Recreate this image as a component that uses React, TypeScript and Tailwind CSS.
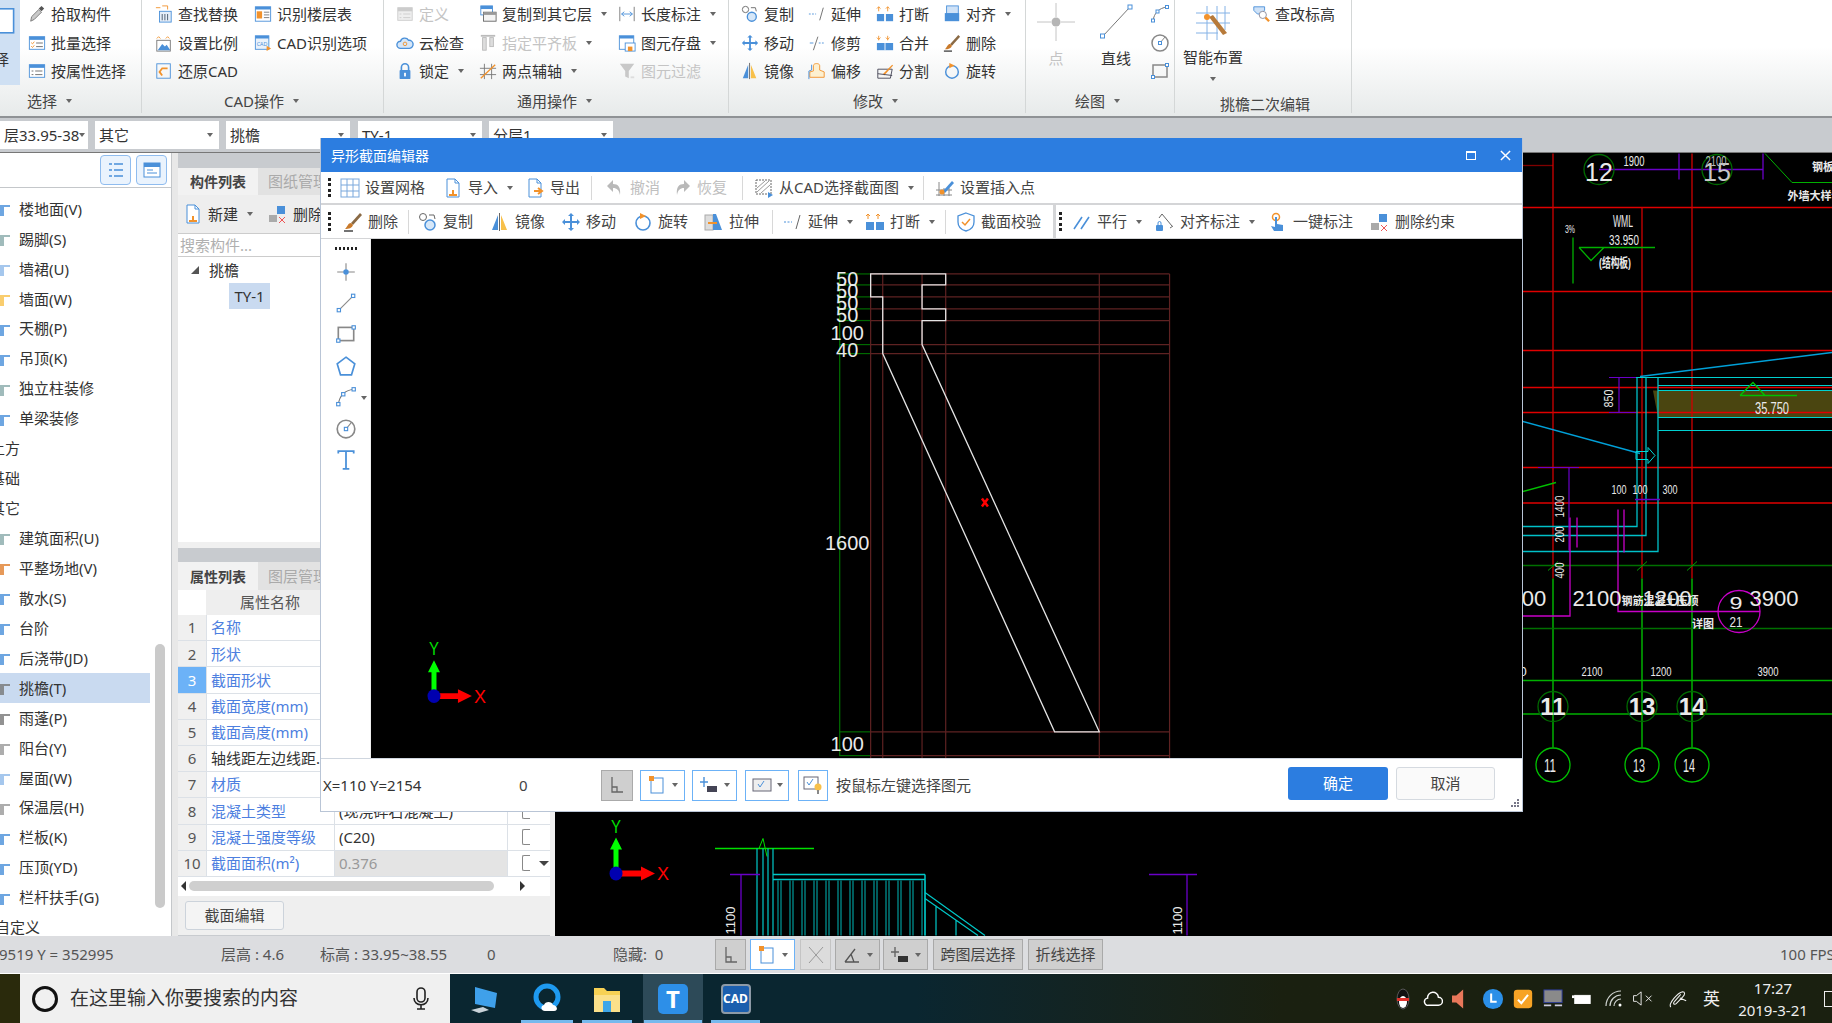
import type { ReactNode } from "react";

const B = "#4a90d9";
const O = "#f2922b";
const Y = "#f7c04a";
const GR = "#a9adb1";
const K = "#5a5a5a";

const ICONS: Record<string, ReactNode> = {
  pick: (<><path d="M3 18l1-5 8-8 3 3-8 8z" fill="#c9c9c9" stroke="#777" /><path d="M12 4l3-3 3 3-3 3z" fill="#555" /></>),
  batch: (<><rect x="1.5" y="3" width="17" height="14" fill="#fff" stroke={B} /><rect x="1.5" y="3" width="17" height="3.5" fill={B} /><path d="M3.5 9.5l1.5 1.5 2-2.5M3.5 13.5l1.5 1.5 2-2.5" stroke={O} fill="none" /><path d="M9 10h7.500M9 14h7.500" stroke="#666" /></>),
  attr: (<><rect x="1.5" y="3" width="17" height="14" fill="#fff" stroke={B} /><rect x="1.5" y="3" width="17" height="3.500" fill={B} /><path d="M4 10h2M4 14h2M8 10h8M8 14h8" stroke="#666" /></>),
  find: (<><path d="M1 3h5M8 1l6 0 0 4" stroke={O} fill="none" /><rect x="5" y="7" width="13" height="12" fill="#e5eef9" stroke={B} /><path d="M8 10v7M11 10v7M14 10v7" stroke="#456" /></>),
  scale: (<><path d="M2 5l2-2 2 2M12 5l2-2 2 2" stroke={O} fill="none" /><rect x="2" y="7" width="15" height="12" fill="#fff" stroke="#777" /><path d="M3 18l5-7 3 3 2-2 4 6z" fill={B} /></>),
  restore: (<><rect x="2" y="2" width="15" height="16" fill="none" stroke={B} /><path d="M14 7H8l-3 4 3 4" fill="none" stroke={O} strokeWidth="2" /></>),
  floor: (<><rect x="1.5" y="2" width="17" height="16" fill="#fff" stroke={B} /><rect x="1.500" y="2" width="17" height="3" fill={B} /><rect x="3" y="7" width="6" height="8" fill={O} /><path d="M11 8h6M11 11h6M11 14h6" stroke="#777" /></>),
  cadopt: (<><rect x="1.5" y="2" width="15" height="15" fill="#eaf2fb" stroke={B} /><rect x="1.5" y="2" width="15" height="3" fill={B} /><text x="3" y="13" fontSize="6" fill={B}>CAD</text><path d="M14 13l5 3-5 3z" fill={O} /></>),
  define: (<><rect x="2" y="3" width="16" height="14" fill="#eee" stroke="#ccc" /><rect x="2" y="3" width="16" height="4" fill="#ccc" /><path d="M8 10h8M8 14h8M4 10h2M4 14h2" stroke="#ccc" /></>),
  cloud: (<><path d="M5 16a4 4 0 010-8 5 5 0 019-1 4.500 4.500 0 011 9z" fill="#d5e6f8" stroke={B} strokeWidth="1.500" /><circle cx="10" cy="11" r="2" fill="none" stroke={O} /></>),
  lock: (<><path d="M6 9V6a4 4 0 018 0v3" fill="none" stroke={B} strokeWidth="1.800" /><rect x="4" y="9" width="12" height="10" rx="1" fill={B} /><rect x="9" y="12" width="2" height="4" fill="#fff" /></>),
  copylayer: (<><rect x="2" y="1" width="13" height="10" fill="#fff" stroke={B} /><rect x="2" y="1" width="13" height="3.500" fill={B} /><rect x="5" y="8" width="14" height="10" fill="#f4f4f4" stroke="#666" /><rect x="5" y="8" width="14" height="3" fill="#999" /></>),
  flat: (<><path d="M2 2h16" stroke="#bbb" strokeWidth="2" /><rect x="4" y="4" width="4" height="14" fill="#ddd" stroke="#bbb" /><rect x="12" y="4" width="4" height="10" fill="#ddd" stroke="#bbb" /></>),
  twopt: (<><path d="M6 2v17M14 2v17M1 7h18M1 14h18" stroke="#777" /><path d="M2 18L18 3" stroke={O} strokeWidth="1.500" /></>),
  len: (<><path d="M2 2v16M18 2v16" stroke="#777" /><path d="M4 10h12M4 10l3-2.500M4 10l3 2.500M16 10l-3-2.500M16 10l-3 2.500" stroke={B} fill="none" /></>),
  save: (<><rect x="1.500" y="2" width="16" height="15" fill="#fff" stroke={B} /><rect x="1.500" y="2" width="16" height="3" fill={B} /><rect x="8" y="10" width="11" height="9" fill="#fff" stroke={B} /><rect x="11" y="14" width="5" height="5" fill={O} /></>),
  filter: (<><path d="M2 2h16l-6 8v8l-4-2v-6z" fill="#c8c8c8" /><rect x="14" y="16" width="4" height="2" fill="#ddd" /></>),
  copy: (<><circle cx="5" cy="5" r="3.500" fill="#fff" stroke="#666" /><circle cx="12" cy="13" r="5" fill="#d6e7f8" stroke={B} strokeWidth="1.500" /><path d="M11 3h5l1 4" stroke="#666" fill="none" /></>),
  extend: (<><path d="M1 10h8" stroke={B} strokeDasharray="2 1.500" /><path d="M13 17L17 3" stroke="#666" /></>),
  brk: (<><path d="M3 2v5M1 4l2-2 2 2M13 2v5M11 4l2-2 2 2" stroke={O} fill="none" /><rect x="1" y="10" width="8" height="8" fill={B} /><rect x="11" y="10" width="8" height="8" fill={B} /></>),
  aligntop: (<><rect x="4" y="1" width="13" height="9" fill="#cfe2f7" stroke={B} /><rect x="2" y="9" width="16" height="9" fill={B} /></>),
  move: (<path d="M10 1l3 3h-2v5h5V7l3 3-3 3v-2h-5v5h2l-3 3-3-3h2v-5H4v2l-3-3 3-3v2h5V4H7z" fill={B} />),
  trim: (<><path d="M12 10h7" stroke={B} strokeDasharray="2 1.500" /><path d="M2 10h4" stroke={B} /><path d="M6 18L11 3" stroke="#666" /></>),
  merge: (<><path d="M3 2v5M1 4l2 2 2-2M13 2v5M11 4l2 2 2-2" stroke={O} fill="none" /><rect x="1" y="10" width="18" height="8" fill={B} /><path d="M10 10v8" stroke="#fff" /></>),
  brush: (<><path d="M17 1L8 11l2 2L19 3z" fill="#8a6a45" /><path d="M8 11c-3 0-3 3-6 6 4 0 7-1 8-4z" fill="#c97a2b" /><path d="M1 19h9" stroke="#444" strokeWidth="1.500" /></>),
  mirror: (<><path d="M8 3v15H2z" fill={B} /><path d="M11 3v15h6z" fill={Y} /><path d="M9.500 1v18" stroke="#666" /></>),
  offset: (<><path d="M2 17V11l4-1V4c0-3 7-3 7 0v5l5 2v6z" fill="#fdf0d0" stroke={O} /><path d="M1 19V10l3-1V3" fill="none" stroke={B} /></>),
  split: (<><path d="M2 8h16l-2 10H2z" fill="none" stroke="#445" /><path d="M8 13L18 3l1 1L9 15z" fill={O} /><path d="M2 13l16 2" stroke="#445" /></>),
  rotate: (<><circle cx="10" cy="11" r="7" fill="none" stroke={B} strokeWidth="1.600" /><path d="M7 1l6 3-6 3z" fill={O} /></>),
  arc: (<><path d="M3 17C4 9 9 4 17 3" fill="none" stroke="#777" /><rect x="1.500" y="15" width="3" height="3" fill="#fff" stroke={B} /><rect x="15.500" y="1.500" width="3" height="3" fill="#fff" stroke={B} /><rect x="6" y="6" width="3" height="3" fill="#fff" stroke={B} /></>),
  circ: (<><circle cx="10" cy="10" r="8" fill="none" stroke="#888" strokeWidth="1.500" /><path d="M10 10l5-6" stroke="#888" /><rect x="8.500" y="8.500" width="3" height="3" fill="#fff" stroke={B} /></>),
  rect: (<><rect x="3" y="4" width="14" height="12" fill="none" stroke="#888" strokeWidth="1.500" /><rect x="1.500" y="14.500" width="3" height="3" fill="#fff" stroke={B} /><rect x="15.500" y="2.500" width="3" height="3" fill="#fff" stroke={B} /></>),
  elev: (<><path d="M2 2h12v4l-5 4H6L2 6z" fill="#cfe2f7" stroke={B} /><circle cx="12" cy="11" r="4" fill="#fff" stroke="#889" /><path d="M15 14l4 4" stroke={O} strokeWidth="2.500" /></>),
  grid: (<><rect x="1" y="1" width="18" height="18" fill="#fff" stroke="#7aa8dc" /><path d="M7 1v18M13 1v18M1 7h18M1 13h18" stroke="#7aa8dc" /></>),
  imp: (<><path d="M4 1h8l4 4v14H4z" fill="#fff" stroke={B} /><path d="M12 1v4h4" fill="none" stroke={B} /><path d="M6 17h8M10 12v6" stroke={O} strokeWidth="2" /></>),
  exp: (<><path d="M4 1h8l4 4v14H4z" fill="#fff" stroke={B} /><path d="M12 1v4h4" fill="none" stroke={B} /><path d="M9 13h7M13 10l4 3-4 3" fill="none" stroke={O} strokeWidth="2" /></>),
  undo: (<path d="M8 2L2 8l6 6v-4c4 0 6 2 7 7 1-8-2-11-7-11z" fill="#b9b9b9" />),
  redo: (<path d="M12 2l6 6-6 6v-4c-4 0-6 2-7 7-1-8 2-11 7-11z" fill="#b9b9b9" />),
  cadsel: (<><rect x="2" y="2" width="15" height="14" fill="url(#none)" stroke="#666" strokeDasharray="2 1" /><path d="M3 14L15 3M3 10l8-7M7 15l9-8" stroke="#999" /><path d="M14 14l5 3-5 3z" fill={B} /></>),
  insert: (<><path d="M4 4v14M9 10v8M14 10v8M1 12h16M1 17h16" stroke="#888" /><path d="M8 13l9-10 2 2-9 10z" fill={B} /><circle cx="7" cy="14" r="2.500" fill={O} /></>),
  stretch: (<><rect x="1" y="3" width="8" height="15" fill="#ddd" stroke="#aaa" /><path d="M9 2h3l6 16H9z" fill={B} /><path d="M4 11h9" stroke={O} strokeWidth="2" /></>),
  verify: (<><path d="M10 1l8 3v6c0 5-4 8-8 9-4-1-8-4-8-9V4z" fill="#fff" stroke={B} strokeWidth="1.300" /><path d="M6 10l3 3 5-6" fill="none" stroke={O} strokeWidth="1.500" /></>),
  parallel: (<path d="M2 17L10 5M9 17l8-12" stroke={B} strokeWidth="1.600" />),
  aligndim: (<><rect x="1" y="13" width="7" height="6" rx="1" fill={B} /><path d="M3 13v-2a1.500 1.500 0 013 0v2" fill="none" stroke={B} /><path d="M7 2l10 12M4 6l3-4M15 16l3-2" stroke="#666" fill="none" /></>),
  onekey: (<><circle cx="8" cy="5" r="3.500" fill="none" stroke={O} strokeWidth="1.500" /><path d="M7 5h2v7l6 1v6H6l-3-5 4 1z" fill={B} /></>),
  delcons: (<><rect x="1" y="11" width="8" height="7" fill="#aaa" /><rect x="9" y="2" width="8" height="8" fill={B} /><path d="M11 13l6 6M17 13l-6 6" stroke="#e55" /></>),
  pointtool: (<><path d="M10 2v6M10 12v6M2 10h6M12 10h6" stroke="#888" /><circle cx="10" cy="10" r="2.500" fill={B} /></>),
  line: (<><path d="M4 16L16 4" stroke="#888" /><rect x="2" y="15" width="3" height="3" fill="#fff" stroke={B} /><rect x="15" y="2" width="3" height="3" fill="#fff" stroke={B} /></>),
  poly: (<path d="M10 2l8 6-3 10H5L2 8z" fill="none" stroke={B} strokeWidth="1.500" />),
  text: (<path d="M3 4V2h14v2M10 2v16M7 18h6" fill="none" stroke={B} strokeWidth="1.600" />),
  ortho: (<path d="M5 2v15h11M5 12h5v5" fill="none" stroke="#666" strokeWidth="1.300" />),
  box: (<><rect x="4" y="3" width="12" height="15" fill="#fff" stroke={B} /><rect x="2" y="1" width="5" height="5" fill={O} /></>),
  plusbox: (<><path d="M5 2v10M1 7h8" stroke={B} strokeWidth="1.400" /><rect x="8" y="11" width="10" height="6" fill="#445" /></>),
  plusbox2: (<><path d="M5 2v10M1 7h8" stroke="#666" strokeWidth="1.400" /><rect x="8" y="11" width="10" height="6" fill="#333" /></>),
  chk: (<><rect x="1" y="4" width="18" height="12" fill="#eee" stroke="#667" /><path d="M6 9l2 3 4-6" stroke={B} fill="none" /></>),
  tip: (<><rect x="1" y="2" width="14" height="12" fill="#fff" stroke="#667" /><path d="M4 7l2 3 4-6" stroke={B} fill="none" /><circle cx="15" cy="12" r="3.500" fill={Y} /><rect x="14" y="15" width="2" height="4" fill="#888" /></>),
  angle: (<path d="M3 17h14M3 17L13 4M9 9l3 8" fill="none" stroke="#555" strokeWidth="1.300" />),
  cross: (<path d="M3 2l14 16M17 2L3 18" fill="none" stroke="#999" />),
};

function Icon({ name, cls = "w-5 h-5" }: { name: string; cls?: string }) {
  return (
    <svg viewBox="0 0 20 20" className={"shrink-0 " + cls}>
      {ICONS[name]}
    </svg>
  );
}

function Caret({ cls = "ml-[9px]" }: { cls?: string }) {
  return <span className={"inline-block h-0 w-0 shrink-0 border-x-[3.5px] border-t-[4px] border-x-transparent border-t-[#666] " + cls} />;
}

function RItem({ icon, label, off, caret }: { icon: string; label: string; off?: boolean; caret?: boolean }) {
  return (
    <div className={"flex h-[28.5px] items-center whitespace-nowrap " + (off ? "text-[#c4c4c4]" : "text-[#333]")}>
      <Icon name={icon} cls="w-[18px] h-[18px]" />
      <span className="ml-[5px]">{label}</span>
      {caret && <Caret />}
    </div>
  );
}

function GroupLabel({ label, cls, plain }: { label: string; cls: string; plain?: boolean }) {
  return (
    <div className={"absolute left-0 right-0 top-[90px] flex h-[22px] items-center text-[#444] " + cls}>
      {label}
      {!plain && <Caret />}
    </div>
  );
}

function Ribbon() {
  return (
    <div className="flex h-[118px] shrink-0 border-b-2 border-[#8f9295] bg-linear-to-b from-white from-40% to-[#e7eaea] text-[15px]">
      <div className="relative flex h-[113px] w-[142px] border-r border-[#d4d7d7]">
        <div className="h-[85px] w-[20px] shrink-0 overflow-hidden bg-[#cfe0f3]">
          <div className="relative h-[45px]">
            <div className="absolute -left-[12px] top-[4px]">
              <Icon name="box" cls="w-8 h-8" />
            </div>
          </div>
          <div className="-ml-[6px] mt-[3px] text-[#333]">择</div>
        </div>
        <div className="ml-[8px]">
          <RItem icon="pick" label="拾取构件" />
          <RItem icon="batch" label="批量选择" />
          <RItem icon="attr" label="按属性选择" />
        </div>
        <GroupLabel label="选择" cls="pl-[27px]" />
      </div>
      <div className="relative flex h-[113px] w-[242px] border-r border-[#d4d7d7] pl-[13px]">
        <div className="w-[99px]">
          <RItem icon="find" label="查找替换" />
          <RItem icon="scale" label="设置比例" />
          <RItem icon="restore" label="还原CAD" />
        </div>
        <div>
          <RItem icon="floor" label="识别楼层表" />
          <RItem icon="cadopt" label="CAD识别选项" />
        </div>
        <GroupLabel label="CAD操作" cls="pl-[82px]" />
      </div>
      <div className="relative flex h-[113px] w-[345px] border-r border-[#d4d7d7] pl-[12px]">
        <div className="w-[83px]">
          <RItem icon="define" label="定义" off />
          <RItem icon="cloud" label="云检查" />
          <RItem icon="lock" label="锁定" caret />
        </div>
        <div className="w-[139px]">
          <RItem icon="copylayer" label="复制到其它层" caret />
          <RItem icon="flat" label="指定平齐板" off caret />
          <RItem icon="twopt" label="两点辅轴" caret />
        </div>
        <div>
          <RItem icon="len" label="长度标注" caret />
          <RItem icon="save" label="图元存盘" caret />
          <RItem icon="filter" label="图元过滤" off />
        </div>
        <GroupLabel label="通用操作" cls="pl-[133px]" />
      </div>
      <div className="relative flex h-[113px] w-[297px] border-r border-[#d4d7d7] pl-[12px]">
        <div className="w-[67px]">
          <RItem icon="copy" label="复制" />
          <RItem icon="move" label="移动" />
          <RItem icon="mirror" label="镜像" />
        </div>
        <div className="w-[68px]">
          <RItem icon="extend" label="延伸" />
          <RItem icon="trim" label="修剪" />
          <RItem icon="offset" label="偏移" />
        </div>
        <div className="w-[67px]">
          <RItem icon="brk" label="打断" />
          <RItem icon="merge" label="合并" />
          <RItem icon="split" label="分割" />
        </div>
        <div>
          <RItem icon="aligntop" label="对齐" caret />
          <RItem icon="brush" label="删除" />
          <RItem icon="rotate" label="旋转" />
        </div>
        <GroupLabel label="修改" cls="pl-[124px]" />
      </div>
      <div className="relative flex h-[113px] w-[149px] border-r border-[#d4d7d7]">
        <div className="flex w-[60px] flex-col items-center pt-[3px] text-[#c4c4c4]">
          <svg viewBox="0 0 38 38" className="h-[38px] w-[38px]">
            <path d="M19 0v14M19 24v14M0 19h14M24 19h14" stroke="#c4c4c4" />
            <circle cx="19" cy="19" r="4.500" fill="#b5b5b5" />
          </svg>
          <span className="mt-[6px]">点</span>
        </div>
        <div className="flex w-[60px] flex-col items-center pt-[3px] text-[#333]">
          <svg viewBox="0 0 38 38" className="h-[38px] w-[38px]">
            <path d="M6 33L33 4" stroke="#777" />
            <rect x="3.500" y="31" width="4" height="4" fill="#fff" stroke={B} />
            <rect x="31" y="2" width="4" height="4" fill="#fff" stroke={B} />
          </svg>
          <span className="mt-[6px]">直线</span>
        </div>
        <div className="pl-[4px]">
          <div className="flex h-[28.5px] items-center"><Icon name="arc" /></div>
          <div className="flex h-[28.5px] items-center"><Icon name="circ" /></div>
          <div className="flex h-[28.5px] items-center"><Icon name="rect" /></div>
        </div>
        <GroupLabel label="绘图" cls="pl-[49px]" />
      </div>
      <div className="relative flex h-[113px] w-[177px] border-r border-[#d4d7d7] pl-[8px]">
        <div className="flex w-[69px] flex-col items-start pt-[5px] text-[#333]">
          <svg viewBox="0 0 36 36" className="ml-[12px] h-[36px] w-[36px]">
            <path d="M1 8h34M1 18h34M1 28h22M12 1v34M22 1v34M30 1v24" stroke="#84b2e6" />
            <path d="M14 12l14 18 4-2-14-18z" fill="#b77a3a" />
            <circle cx="12" cy="12" r="3" fill={O} />
          </svg>
          <span className="mt-[5px]">智能布置</span>
          <Caret cls="ml-[27px] mt-[8px]" />
        </div>
        <div>
          <RItem icon="elev" label="查改标高" />
        </div>
        <GroupLabel label="挑檐二次编辑" cls="pl-[45px] top-[93px]" plain />
      </div>
      <div className="flex-1" />
    </div>
  );
}

function Combo({ label, cls }: { label: string; cls: string }) {
  return (
    <div className={"flex h-[28px] items-center justify-between overflow-hidden whitespace-nowrap bg-white pl-[4px] pr-[6px] text-[15px] text-[#333] " + cls}>
      <span>{label}</span>
      <Caret cls="" />
    </div>
  );
}

function ComboBar() {
  return (
    <div className="flex h-[35px] shrink-0 items-center gap-[7px] border-b border-[#777] bg-[#c8cbcf] text-[15px]">
      <Combo label="层33.95-38" cls="w-[88px]" />
      <Combo label="其它" cls="w-[124px]" />
      <Combo label="挑檐" cls="w-[124px]" />
      <Combo label="TY-1" cls="ml-[1px] w-[124px]" />
      <Combo label="分层1" cls="w-[124px]" />
    </div>
  );
}

const TREE: { t: string; i?: string; c?: string; sec?: boolean; on?: boolean }[] = [
  { t: "楼地面(V)", c: "#4a90d9" },
  { t: "踢脚(S)", c: "#8aa" },
  { t: "墙裙(U)", c: "#8fb9e8" },
  { t: "墙面(W)", c: "#f7c04a" },
  { t: "天棚(P)", c: "#4a90d9" },
  { t: "吊顶(K)", c: "#4a90d9" },
  { t: "独立柱装修", c: "#8aa" },
  { t: "单梁装修", c: "#4a90d9" },
  { t: "土方", sec: true },
  { t: "基础", sec: true },
  { t: "其它", sec: true },
  { t: "建筑面积(U)", c: "#8aa" },
  { t: "平整场地(V)", c: "#e08030" },
  { t: "散水(S)", c: "#4a90d9" },
  { t: "台阶", c: "#4a90d9" },
  { t: "后浇带(JD)", c: "#4a90d9" },
  { t: "挑檐(T)", c: "#777", on: true },
  { t: "雨蓬(P)", c: "#777" },
  { t: "阳台(Y)", c: "#999" },
  { t: "屋面(W)", c: "#8fb9e8" },
  { t: "保温层(H)", c: "#999" },
  { t: "栏板(K)", c: "#4a90d9" },
  { t: "压顶(YD)", c: "#4a90d9" },
  { t: "栏杆扶手(G)", c: "#4a90d9" },
  { t: "自定义", sec: true },
];

function LeftPanel() {
  return (
    <div className="relative h-full w-[172px] shrink-0 overflow-hidden border-r border-[#c4c7ca] bg-white text-[15px] text-[#333]">
      <div className="flex h-[35px] items-center justify-end gap-[5px] border-b border-[#c4c7ca] pr-[4px]">
        <div className="flex h-[30px] w-[31px] items-center justify-center rounded border border-[#8fbcef] bg-[#eaf3fd]">
          <svg viewBox="0 0 20 20" className="h-5 w-5">
            <path d="M3 4h3M3 10h3M3 16h3M8 4h9M8 10h9M8 16h9" stroke={B} strokeWidth="1.500" />
          </svg>
        </div>
        <div className="flex h-[30px] w-[31px] items-center justify-center rounded border border-[#8fbcef] bg-[#eaf3fd]">
          <svg viewBox="0 0 20 20" className="h-5 w-5">
            <rect x="2" y="3" width="16" height="14" fill="#fff" stroke={B} />
            <rect x="2" y="3" width="16" height="4" fill={B} />
            <path d="M5 10h6M5 13h10" stroke={B} />
          </svg>
        </div>
      </div>
      <div className="pt-[6px]">
        {TREE.map((r) =>
          r.sec ? (
            <div key={r.t} className={"flex h-[29.95px] items-center whitespace-nowrap " + (r.t === "自定义" ? "-ml-[5px]" : "-ml-[10px]")}>
              {r.t}
            </div>
          ) : (
            <div key={r.t} className={"flex h-[29.95px] w-[150px] items-center whitespace-nowrap " + (r.on ? "bg-[#c9daf0]" : "")}>
              <svg viewBox="0 0 12 16" className="h-[16px] w-[12px] shrink-0">
                <path d="M0 4h10v2H4v9H0z" fill={r.c} opacity="0.8" />
              </svg>
              <span className="ml-[7px]">{r.t}</span>
            </div>
          )
        )}
      </div>
      <div className="absolute left-[155px] top-[491px] h-[264px] w-[10px] rounded-full bg-[#cacaca]" />
    </div>
  );
}

const PROPS: [string, string, boolean?][] = [
  ["名称", "TY-1"],
  ["形状", "异形"],
  ["截面形状", "异形"],
  ["截面宽度(mm)", "750"],
  ["截面高度(mm)", "2150"],
  ["轴线距左边线距.", "(375)"],
  ["材质", "现浇混凝土"],
  ["混凝土类型", "(现浇碎石混凝土)"],
  ["混凝土强度等级", "(C20)"],
  ["截面面积(m²)", "0.376", true],
];

function MiddlePanel() {
  return (
    <div className="ml-[6px] flex h-full w-[372px] shrink-0 flex-col bg-[#c8cbcf] text-[15px] text-[#333]">
      <div className="h-[15px] shrink-0" />
      <div className="flex h-[27px] shrink-0 bg-[#e2e2e2]">
        <div className="flex w-[80px] items-center justify-center bg-[#f2f2f2] font-bold text-[14px] text-[#444]">构件列表</div>
        <div className="ml-[10px] flex items-center whitespace-nowrap text-[#aaa]">图纸管理</div>
      </div>
      <div className="flex h-[38px] shrink-0 items-center bg-[#eeeeee] pl-[5px]">
        <Icon name="imp" />
        <span className="ml-[5px]">新建</span>
        <Caret />
        <span className="ml-[15px] flex items-center"><Icon name="delcons" /></span>
        <span className="ml-[5px]">删除</span>
      </div>
      <div className="flex h-[24px] shrink-0 items-center border-y border-[#ccc] bg-white pl-[2px] text-[#b0b0b0]">搜索构件...</div>
      <div className="h-[285px] shrink-0 bg-white">
        <div className="flex h-[26px] items-center pl-[13px]">
          <span className="h-0 w-0 border-b-[8px] border-l-[8px] border-b-[#555] border-l-transparent" />
          <span className="ml-[10px]">挑檐</span>
        </div>
        <div className="ml-[51px] flex h-[26px] w-[41px] items-center justify-center bg-[#c9daf0]">TY-1</div>
      </div>
      <div className="h-[6px] shrink-0 bg-[#f0f0f0]" />
      <div className="h-[14px] shrink-0" />
      <div className="flex h-[28px] shrink-0 bg-[#e2e2e2]">
        <div className="flex w-[80px] items-center justify-center bg-[#f2f2f2] font-bold text-[14px] text-[#444]">属性列表</div>
        <div className="ml-[10px] flex items-center whitespace-nowrap text-[#aaa]">图层管理</div>
      </div>
      <div className="grid h-[25px] shrink-0 grid-cols-[28px_128px_1fr] bg-white">
        <span />
        <span className="flex items-center justify-center bg-[#eeeeee] text-[#555]">属性名称</span>
        <span className="bg-[#eeeeee]" />
      </div>
      <div className="shrink-0 bg-white">
        {PROPS.map((p, i) => (
          <div key={p[0]} className="grid h-[26.2px] grid-cols-[28px_129px_173px_42px] border-b border-[#dce1e7]">
            <span className={"flex items-center justify-center " + (i === 2 ? "bg-[#6cb2f7] text-white" : "bg-[#f0f0f0] text-[#555]")}>{i + 1}</span>
            <span className={"flex items-center overflow-hidden whitespace-nowrap border-x border-[#dce1e7] pl-[4px] " + (i === 5 ? "text-[#333]" : "text-[#4d7fe0]")}>{p[0]}</span>
            <span className={"flex items-center overflow-hidden whitespace-nowrap border-r border-[#dce1e7] pl-[4px] " + (p[2] ? "bg-[#e4e4e4] text-[#999]" : "")}>{p[1]}</span>
            <span className="flex items-center pl-[14px]">
              <span className="h-[16px] w-[8px] rounded-l-[2px] border-y border-l border-[#888]" />
              {i === 9 && <span className="ml-[9px] h-0 w-0 border-x-[5px] border-t-[5px] border-x-transparent border-t-[#444]" />}
            </span>
          </div>
        ))}
      </div>
      <div className="flex h-[19px] shrink-0 items-center bg-white px-[3px]">
        <span className="h-0 w-0 border-y-[5px] border-r-[5px] border-y-transparent border-r-[#333]" />
        <span className="mx-[3px] h-[10px] w-[305px] rounded-full bg-[#cfcfcf]" />
        <span className="ml-auto mr-[22px] h-0 w-0 border-y-[5px] border-l-[5px] border-y-transparent border-l-[#333]" />
      </div>
      <div className="flex h-[39px] shrink-0 items-center bg-[#efefef] pl-[7px]">
        <div className="flex h-[29px] w-[99px] items-center justify-center rounded-[3px] border border-[#ccd3db] bg-[#f4f4f4] text-[#444]">截面编辑</div>
      </div>
    </div>
  );
}

function Txt({ x, y, s = 14, c = "#eaeaea", w, rot, b, children }: { x: number; y: number; s?: number; c?: string; w?: number; rot?: boolean; b?: boolean; children: string }) {
  return (
    <text
      x={x}
      y={y}
      fontSize={s}
      fill={c}
      textAnchor="middle"
      dominantBaseline="central"
      fontFamily={"'Liberation Sans','Noto Sans CJK SC',sans-serif"}
      fontWeight={b ? 700 : 400}
      textLength={w}
      lengthAdjust={w ? "spacingAndGlyphs" : undefined}
      transform={rot ? `rotate(-90 ${x} ${y})` : undefined}
    >
      {children}
    </text>
  );
}

function Axis({ x, y, top, right }: { x: number; y: number; top: number; right: number }) {
  return (
    <g>
      <path d={`M${x - 2.5} ${y} V${top + 12} H${x - 6} L${x} ${top} L${x + 6} ${top + 12} H${x + 2.5} V${y}z`} fill="#00ff00" />
      <path d={`M${x} ${y - 3} H${right - 14} V${y - 7} L${right} ${y} L${right - 14} ${y + 7} V${y + 3} H${x}z`} fill="#ff0000" />
      <ellipse cx={x} cy={y} rx="6.500" ry="7" fill="#0000b0" />
      <Txt x={x} y={top - 11} s={18} c="#00e000" w={10}>Y</Txt>
      <Txt x={right + 8} y={y} s={19} c="#ff0000" w={12}>X</Txt>
    </g>
  );
}

function MainCanvas() {
  const reds = [387, 412, 467, 502.5, 350, 291, 207];
  const bars = Array.from({ length: 13 }, (_, i) => 778 + i * 12);
  return (
    <svg viewBox="555 153 1277 782" className="h-full min-w-0 flex-1 bg-black">
      {/* stairs under the dialog */}
      <path d="M715 848H814" stroke="#00e000" strokeWidth="1.500" />
      <path d="M759 848l4-10 4 18" stroke="#00e000" fill="none" />
      <path d="M757 848V935M763 848V935M768 848V935M773 848V935" stroke="#00c8c8" strokeWidth="1.200" />
      <path d="M773 874H925M773 879H925M925 874V935" stroke="#00c8c8" strokeWidth="1.500" />
      {bars.map((x) => (
        <path key={x} d={`M${x} 880V935M${x + 3} 880V935`} stroke="#00b8b8" />
      ))}
      <path d="M925 892L985 935M925 898L978 935M936 905V935M956 920V935" stroke="#00c8c8" strokeWidth="1.200" />
      <path d="M730 874H760M741 874V935M1149 874H1197M1187 874V935" stroke="#6a00c8" strokeWidth="1.300" />
      <Txt x={731} y={920} s={12} rot w={28}>1100</Txt>
      <Txt x={1178} y={920} s={12} rot w={28}>1100</Txt>
      <Axis x={616} y={873} top={837} right={655} />

      {/* right part of the drawing */}
      <path d="M1653 390H1832V417H1658z" fill="#4a4510" />
      {reds.map((y) => (
        <path key={y} d={`M1523 ${y}H1832`} stroke="#e00000" strokeWidth="1.300" />
      ))}
      <path d="M1523 165H1553" stroke="#800000" strokeWidth="1.300" />
      <path d="M1553 153V578M1692 153V578M1642 207V578" stroke="#d00000" strokeWidth="1.300" />
      <path d="M1553 578V747M1642 578V747M1692 578V747" stroke="#00b000" strokeWidth="1.500" />
      <path d="M1523 565H1832M1523 628H1832" stroke="#007000" strokeWidth="1.300" />
      <path d="M1523 680H1832M1523 713.500H1832" stroke="#00b000" strokeWidth="1.300" />
      <path d="M1548 570l10-9M1637 570l10-9M1687 570l10-9" stroke="#00a000" />
      {/* axis bubbles */}
      <path d="M1599 169H1763M1679 153V179M1763 153V179" stroke="#6a00c8" strokeWidth="1.300" />
      {[[1599, 169], [1717, 169], [1553, 706], [1642, 706], [1692, 706]].map(([x, y]) => (
        <circle key={x + "-" + y} cx={x} cy={y} r="15" fill="none" stroke="#006a00" strokeWidth="1.300" />
      ))}
      <Txt x={1599} y={171} s={25}>12</Txt>
      <Txt x={1717} y={171} s={25} c="#c8c8c8">15</Txt>
      <Txt x={1634} y={160} s={14} w={21}>1900</Txt>
      <Txt x={1716} y={160} s={14} w={21} c="#bbb">2100</Txt>
      <Txt x={1553} y={706} s={24} b>11</Txt>
      <Txt x={1642} y={706} s={24} b>13</Txt>
      <Txt x={1692} y={706} s={24} b>14</Txt>
      {[1553, 1642, 1692].map((x, i) => (
        <g key={x}>
          <circle cx={x} cy={764.5} r="17" fill="none" stroke="#00c000" strokeWidth="1.300" />
          <Txt x={x - 3} y={765} s={18} w={12}>{["11", "13", "14"][i]}</Txt>
        </g>
      ))}
      {/* level mark */}
      <path d="M1579 247H1655M1579 247L1591 260L1604 247M1573 237V283" stroke="#00b000" strokeWidth="1.300" fill="none" />
      <Txt x={1623} y={221} s={16} w={20}>WML</Txt>
      <Txt x={1624} y={239} s={14} w={30}>33.950</Txt>
      <Txt x={1570} y={228} s={11} w={10}>3%</Txt>
      <Txt x={1615} y={262} s={13} w={32} b>(结构板)</Txt>
      <path d="M1765 153L1792 182H1832" stroke="#00b000" fill="none" />
      <Txt x={1823} y={166} s={11} b>钢板</Txt>
      <Txt x={1815} y={195} s={11} b>外墙大样详</Txt>
      {/* parapet */}
      <path d="M1640 376L1832 352M1523 421L1640 453" stroke="#00a0d8" strokeWidth="1.300" />
      <path d="M1636 377H1832M1658 385H1832M1658 390H1832M1658 417H1832M1658 430H1832" stroke="#00d0d0" strokeWidth="1.200" />
      <path d="M1637 377V526H1523M1646 377V535H1523M1658 377V551H1523" stroke="#00c0c8" strokeWidth="1.300" fill="none" />
      <path d="M1636 451H1648V447L1655 455L1648 463V459H1636z" fill="none" stroke="#00d8d8" />
      <path d="M1740 395H1797M1740 395L1753 382L1765 395" stroke="#00c000" strokeWidth="1.300" fill="none" />
      <Txt x={1772} y={408} s={16} w={34}>35.750</Txt>
      <path d="M1609 377H1636M1609 412H1636M1619 377V412" stroke="#6a00c8" strokeWidth="1.200" />
      <Txt x={1609} y={398} s={12} rot w={18}>850</Txt>
      <path d="M1538 467H1579M1569 467V550" stroke="#6a00c8" strokeWidth="1.200" />
      <path d="M1635 499H1660" stroke="#6a00c8" strokeWidth="1.500" />
      <path d="M1523 491L1556 482" stroke="#00c000" strokeWidth="1.300" />
      <Txt x={1619} y={489} s={13} w={15}>100</Txt>
      <Txt x={1640} y={489} s={13} w={15}>100</Txt>
      <Txt x={1670} y={489} s={13} w={15}>300</Txt>
      <Txt x={1560} y={506} s={12} rot w={22}>1400</Txt>
      <Txt x={1560} y={534} s={12} rot w={16}>200</Txt>
      <Txt x={1560} y={570} s={12} rot w={16}>400</Txt>
      <path d="M1523 615.500H1570V517M1577 517V547M1618 509V611H1760M1624 509V552" stroke="#c800c8" strokeWidth="1.300" fill="none" />
      <circle cx="1739" cy="611" r="21" stroke="#c800c8" strokeWidth="1.300" fill="none" />
      <Txt x={1736} y={603} s={16} w={13}>9</Txt>
      <Txt x={1736} y={621} s={15} w={13}>21</Txt>
      <Txt x={1534} y={598} s={22}>00</Txt>
      <Txt x={1597} y={598} s={22}>2100</Txt>
      <Txt x={1667} y={598} s={22}>1200</Txt>
      <Txt x={1774} y={598} s={22}>3900</Txt>
      <Txt x={1660} y={600} s={11} b>钢筋混凝土压顶</Txt>
      <Txt x={1703} y={623} s={11} b>详图</Txt>
      <Txt x={1523} y={671} s={13}>0</Txt>
      <Txt x={1592} y={671} s={13} w={21}>2100</Txt>
      <Txt x={1661} y={671} s={13} w={21}>1200</Txt>
      <Txt x={1768} y={671} s={13} w={21}>3900</Txt>
    </svg>
  );
}

function Grip() {
  return (
    <div className="flex h-[20px] w-[3px] flex-col justify-between">
      {[0, 1, 2, 3].map((i) => (
        <span key={i} className="h-[3px] w-[3px] bg-[#222]" />
      ))}
    </div>
  );
}

function Tb({ icon, t, w, off, caret }: { icon: string; t: string; w: string; off?: boolean; caret?: boolean }) {
  return (
    <div className={"flex shrink-0 items-center whitespace-nowrap " + w + (off ? " text-[#c0c0c0]" : " text-[#444]")}>
      <Icon name={icon} />
      <span className="ml-[5px]">{t}</span>
      {caret && <Caret />}
    </div>
  );
}

function Sep({ w }: { w: string }) {
  return (
    <div className={"flex h-[24px] shrink-0 " + w}>
      <span className="h-full w-px bg-[#d8d8d8]" />
    </div>
  );
}

function ToolIcon({ name, caret }: { name: string; caret?: boolean }) {
  return (
    <div className="relative flex h-[31.4px] items-center justify-center">
      <Icon name={name} cls="w-[22px] h-[22px]" />
      {caret && <span className="absolute right-[3px] top-[14px] h-0 w-0 border-x-[3px] border-t-[4px] border-x-transparent border-t-[#666]" />}
    </div>
  );
}

function FootBtn({ icon, w, gray, caret }: { icon: string; w: string; gray?: boolean; caret?: boolean }) {
  return (
    <div className={"flex h-[31px] shrink-0 items-center justify-center border " + w + (gray ? " border-[#aaa] bg-[#cfcfcf]" : " border-[#6cb2f7] bg-white")}>
      <Icon name={icon} />
      {caret && <Caret cls="ml-[5px]" />}
    </div>
  );
}

function SectionDrawing() {
  const hs = [274, 285, 297, 309, 320.7, 344.8, 353.8, 732.8, 756.6];
  const vs = [870.5, 882.6, 922, 945.7, 1099.6, 1170];
  return (
    <svg viewBox="371 239 1151 520" className="h-full min-w-0 flex-1 bg-black">
      {hs.map((y) => (
        <g key={y}>
          <path d={`M870 ${y}H1170`} stroke="#5e2222" strokeWidth="1.200" />
          <path d={`M839 ${y}H870`} stroke="#006a00" strokeWidth="1.200" />
        </g>
      ))}
      {vs.map((x) => (
        <path key={x} d={`M${x} 274V759`} stroke="#5e2222" strokeWidth="1.200" />
      ))}
      <path d="M839.500 274V757" stroke="#007000" strokeWidth="1.200" />
      <path
        d="M870.500 274H945.700V285H922V309H945.700V320.700H922V344.800L1099.600 732.800H1054.800L882.600 353.800V297H870.500z"
        fill="none"
        stroke="#e4e4e4"
        strokeWidth="1.300"
      />
      <Txt x={847} y={279} s={20}>50</Txt>
      <Txt x={847} y={291} s={20}>50</Txt>
      <Txt x={847} y={303} s={20}>50</Txt>
      <Txt x={847} y={315} s={20}>50</Txt>
      <Txt x={847} y={333} s={20}>100</Txt>
      <Txt x={847} y={350} s={20}>40</Txt>
      <Txt x={847} y={544} s={20}>1600</Txt>
      <Txt x={847} y={745} s={20}>100</Txt>
      <path d="M982 499l6 8M988 499l-6 8" stroke="#ff0000" strokeWidth="2.500" />
      <Axis x={433} y={697} top={661} right={471} />
    </svg>
  );
}

function Dialog() {
  return (
    <div className="absolute left-[320px] top-[138px] flex h-[674px] w-[1203px] flex-col border border-t-0 border-[#b9c5d6] bg-white text-[15px]">
      <div className="flex h-[34px] shrink-0 items-center justify-between bg-[#2c7de0] pl-[10px] pr-[11px] text-[14px] text-white">
        <span>异形截面编辑器</span>
        <div className="flex items-center gap-[24px]">
          <span className="h-[9px] w-[10px] border border-t-2 border-white" />
          <svg viewBox="0 0 12 12" className="h-[11px] w-[11px]">
            <path d="M1 1l10 10M11 1L1 11" stroke="#fff" strokeWidth="1.600" />
          </svg>
        </div>
      </div>
      <div className="flex h-[33px] shrink-0 items-center border-b-2 border-[#d4d5d7] pl-[7px]">
        <div className="w-[12px] shrink-0"><Grip /></div>
        <Tb icon="grid" t="设置网格" w="w-[103px]" />
        <Tb icon="imp" t="导入" w="w-[82px]" caret />
        <Tb icon="exp" t="导出" w="w-[66px]" />
        <Sep w="w-[14px]" />
        <Tb icon="undo" t="撤消" w="w-[67px]" off />
        <Tb icon="redo" t="恢复" w="w-[70px]" off />
        <Sep w="w-[12px]" />
        <Tb icon="cadsel" t="从CAD选择截面图" w="w-[169px]" caret />
        <Sep w="w-[12px]" />
        <Tb icon="insert" t="设置插入点" w="w-[100px]" />
      </div>
      <div className="flex h-[34px] shrink-0 items-center border-b border-[#d4d5d7] pl-[7px]">
        <div className="w-[15px] shrink-0"><Grip /></div>
        <Tb icon="brush" t="删除" w="w-[65px]" />
        <Sep w="w-[10px]" />
        <Tb icon="copy" t="复制" w="w-[72px]" />
        <Tb icon="mirror" t="镜像" w="w-[71px]" />
        <Tb icon="move" t="移动" w="w-[72px]" />
        <Tb icon="rotate" t="旋转" w="w-[71px]" />
        <Tb icon="stretch" t="拉伸" w="w-[68px]" />
        <Sep w="w-[11px]" />
        <Tb icon="extend" t="延伸" w="w-[82px]" caret />
        <Tb icon="brk" t="打断" w="w-[80px]" caret />
        <Sep w="w-[11px]" />
        <Tb icon="verify" t="截面校验" w="w-[97px]" />
        <span className="h-full w-[3px] shrink-0 bg-[#d4d5d7]" />
        <div className="w-[16px] shrink-0 pl-[3px]"><Grip /></div>
        <Tb icon="parallel" t="平行" w="w-[83px]" caret />
        <Tb icon="aligndim" t="对齐标注" w="w-[113px]" caret />
        <Tb icon="onekey" t="一键标注" w="w-[102px]" />
        <Tb icon="delcons" t="删除约束" w="w-[90px]" />
      </div>
      <div className="flex min-h-0 flex-1">
        <div className="flex w-[50px] shrink-0 flex-col border-r border-[#eee] pt-[8px]">
          <div className="mb-[5px] flex h-[4px] justify-center gap-[2px]">
            {[0, 1, 2, 3, 4, 5].map((i) => (
              <span key={i} className="h-[3px] w-[2px] bg-[#222]" />
            ))}
          </div>
          <ToolIcon name="pointtool" />
          <ToolIcon name="line" />
          <ToolIcon name="rect" />
          <ToolIcon name="poly" />
          <ToolIcon name="arc" caret />
          <ToolIcon name="circ" />
          <ToolIcon name="text" />
        </div>
        <SectionDrawing />
      </div>
      <div className="flex h-[53px] shrink-0 items-center border-t border-[#cfd6df] pl-[2px] text-[#444]">
        <span className="w-[196px] shrink-0 text-[#333]">X=110 Y=2154</span>
        <span className="w-[82px] shrink-0">0</span>
        <FootBtn icon="ortho" w="w-[32px]" gray />
        <div className="w-[7px] shrink-0" />
        <FootBtn icon="box" w="w-[45px]" caret />
        <div className="w-[7px] shrink-0" />
        <FootBtn icon="plusbox" w="w-[45px]" caret />
        <div className="w-[8px] shrink-0" />
        <FootBtn icon="chk" w="w-[44px]" caret />
        <div className="w-[9px] shrink-0" />
        <FootBtn icon="tip" w="w-[30px]" />
        <span className="ml-[8px] whitespace-nowrap">按鼠标左键选择图元</span>
        <div className="ml-[317px] flex h-[33px] w-[100px] shrink-0 -translate-y-[2px] items-center justify-center rounded-[3px] bg-[#2c7de0] text-white">确定</div>
        <div className="ml-[8px] flex h-[33px] w-[99px] shrink-0 -translate-y-[2px] items-center justify-center rounded-[3px] border border-[#d5dae0] bg-[#fafafa]">取消</div>
      </div>
      <svg viewBox="0 0 10 10" className="absolute bottom-[3px] right-[3px] h-[10px] w-[10px]">
        <path d="M8 1h2v2H8zM5 4h2v2H5zM8 4h2v2H8zM2 7h2v2H2zM5 7h2v2H5zM8 7h2v2H8z" fill="#778" />
      </svg>
    </div>
  );
}

function SBtn({ w, on, off, children }: { w: string; on?: boolean; off?: boolean; children: ReactNode }) {
  return (
    <div className={"flex h-[31px] shrink-0 items-center justify-center whitespace-nowrap border text-[#444] " + w + (on ? " border-[#6cb2f7] bg-white" : off ? " border-[#c4c4c4] bg-[#dcdcdc]" : " border-[#a9a9a9] bg-[#cfcfcf]")}>
      {children}
    </div>
  );
}

function StatusBar() {
  return (
    <div className="flex h-[37px] shrink-0 items-center overflow-hidden bg-[#dcdde0] text-[15px] text-[#555]">
      <span className="-ml-[1px] w-[222px] shrink-0 whitespace-nowrap">9519 Y = 352995</span>
      <span className="w-[99px] shrink-0 whitespace-nowrap">层高 : 4.6</span>
      <span className="w-[167px] shrink-0 whitespace-nowrap">标高 : 33.95~38.55</span>
      <span className="w-[126px] shrink-0">0</span>
      <span className="w-[102px] shrink-0 whitespace-nowrap">隐藏:&nbsp; 0</span>
      <SBtn w="w-[31px]"><Icon name="ortho" /></SBtn>
      <SBtn w="ml-[4px] w-[45px]" on><Icon name="box" /><Caret cls="ml-[5px]" /></SBtn>
      <SBtn w="ml-[5px] w-[31px]" off><Icon name="cross" /></SBtn>
      <SBtn w="ml-[4px] w-[45px]"><Icon name="angle" /><Caret cls="ml-[5px]" /></SBtn>
      <SBtn w="ml-[3px] w-[45px]"><Icon name="plusbox2" /><Caret cls="ml-[5px]" /></SBtn>
      <SBtn w="ml-[5px] w-[90px]">跨图层选择</SBtn>
      <SBtn w="ml-[5px] w-[75px]">折线选择</SBtn>
      <span className="ml-[677px] shrink-0 whitespace-nowrap">100 FPS</span>
    </div>
  );
}

function TaskIcon({ cls, active, children }: { cls: string; active?: boolean; children: ReactNode }) {
  return (
    <div className={"relative flex h-full shrink-0 items-center justify-center " + cls}>
      {children}
      {active && <span className="absolute bottom-0 left-[1px] right-[1px] h-[3px] bg-[#76b9ed]" />}
    </div>
  );
}

function Taskbar() {
  return (
    <div className="flex h-[50px] shrink-0 items-center border-t border-white bg-linear-to-r from-[#0a2630] from-50% to-[#1a2010] to-70% text-white">
      <div className="h-full w-[20px] shrink-0 bg-[#2a2a0c]" />
      <div className="flex h-full w-[430px] shrink-0 items-center bg-[#f0f0f0] pl-[12px] text-[19px] text-[#333]">
        <span className="h-[26px] w-[26px] shrink-0 rounded-full border-[3.5px] border-[#111]" />
        <span className="ml-[12px] whitespace-nowrap">在这里输入你要搜索的内容</span>
        <svg viewBox="0 0 20 24" className="ml-[113px] h-[24px] w-[20px] shrink-0">
          <rect x="6" y="1" width="8" height="14" rx="4" fill="none" stroke="#222" strokeWidth="1.600" />
          <path d="M3 11c0 9 14 9 14 0M10 18v4M6 22h8" fill="none" stroke="#222" strokeWidth="1.600" />
        </svg>
      </div>
      <TaskIcon cls="ml-[14px] w-[40px]">
        <svg viewBox="0 0 30 30" className="h-[30px] w-[30px]">
          <path d="M6 3l22 6-2 15-20-4z" fill="#3fa0ea" />
          <path d="M2 26l12-3 6 3-10 3z" fill="#c9d2d8" />
        </svg>
      </TaskIcon>
      <TaskIcon cls="ml-[16px] w-[54px]" active>
        <svg viewBox="0 0 32 32" className="h-[32px] w-[32px]">
          <circle cx="16" cy="14" r="11" fill="none" stroke="#1e9af0" strokeWidth="5" />
          <path d="M14 28c-4 0-5-5-1-6 1-4 8-4 9 0 4 0 6 6 1 6z" fill="#fff" />
        </svg>
      </TaskIcon>
      <TaskIcon cls="ml-[7px] w-[52px]" active>
        <svg viewBox="0 0 30 30" className="h-[30px] w-[30px]">
          <path d="M2 4h10l3 3h13v21H2z" fill="#f7d154" />
          <rect x="2" y="11" width="26" height="17" fill="#fbe08a" />
          <rect x="11" y="17" width="8" height="11" fill="#3ea6e8" />
        </svg>
      </TaskIcon>
      <TaskIcon cls="ml-[10px] h-full w-[60px] bg-[#2d4a58]" active>
        <div className="flex h-[30px] w-[30px] items-center justify-center rounded-[5px] bg-[#2d8fe8] text-[24px] font-bold leading-none text-white">T</div>
      </TaskIcon>
      <TaskIcon cls="ml-[7px] w-[51px]" active>
        <div className="flex h-[30px] w-[30px] items-center justify-center rounded-[4px] border-2 border-[#8d9aa6] bg-[#1b5fae] text-[12px] font-bold leading-none text-white">CAD</div>
      </TaskIcon>
      <div className="flex-1" />
      <div className="flex h-full shrink-0 items-center">
        <svg viewBox="0 0 16 24" className="h-[24px] w-[16px]">
          <ellipse cx="8" cy="12" rx="6" ry="10" fill="#111" stroke="#555" />
          <ellipse cx="8" cy="15" rx="4" ry="6" fill="#fff" />
          <path d="M2 11h12v3H2z" fill="#e0302a" />
        </svg>
        <svg viewBox="0 0 22 20" className="ml-[12px] h-[18px] w-[20px]">
          <path d="M6 17a4 4 0 01-1-8 6 6 0 0112-1 4.500 4.500 0 010 9z" fill="none" stroke="#fff" strokeWidth="1.600" />
        </svg>
        <svg viewBox="0 0 14 24" className="ml-[9px] h-[24px] w-[12px]">
          <path d="M0 8h5l8-7v22l-8-7H0z" fill="#e8775a" />
        </svg>
        <svg viewBox="0 0 24 24" className="ml-[18px] h-[24px] w-[22px]">
          <circle cx="12" cy="12" r="11" fill="#2b8fe8" />
          <path d="M10 6v9h6" fill="none" stroke="#fff" strokeWidth="2.200" />
        </svg>
        <svg viewBox="0 0 24 24" className="ml-[9px] h-[24px] w-[20px]">
          <rect x="1" y="1" width="22" height="22" rx="4" fill="#f7a325" />
          <path d="M6 13l4 4 8-10" fill="none" stroke="#fff" strokeWidth="2.500" />
        </svg>
        <svg viewBox="0 0 22 20" className="ml-[10px] h-[20px] w-[20px]">
          <rect x="1" y="0" width="20" height="14" fill="#8a8a8a" stroke="#2a3a9a" />
          <path d="M1 17h8M13 17h8" stroke="#ccd" strokeWidth="2" />
        </svg>
        <svg viewBox="0 0 22 14" className="ml-[9px] h-[14px] w-[20px]">
          <rect x="3" y="3" width="17" height="9" fill="#fff" stroke="#fff" />
          <path d="M0 3h3v3H0z" fill="#fff" />
        </svg>
        <svg viewBox="0 0 20 20" className="ml-[12px] h-[20px] w-[20px]">
          <path d="M2 17A15 15 0 0117 2M6 17A11 11 0 0117 6M10 17a7 7 0 017-7" fill="none" stroke="#cfd3d0" strokeWidth="1.200" />
          <circle cx="16" cy="16" r="1.500" fill="#fff" />
        </svg>
        <svg viewBox="0 0 22 18" className="ml-[8px] h-[17px] w-[22px]">
          <path d="M1 6h3l5-4v14l-5-4H1z" fill="none" stroke="#eee" />
          <path d="M14 6l6 6M20 6l-6 6" stroke="#eee" />
        </svg>
        <svg viewBox="0 0 22 22" className="ml-[14px] h-[20px] w-[20px]">
          <path d="M3 20c-3-4 8-16 13-17 3 0 3 3 0 6L9 16c-2 2-4 0-2-2l7-8M13 10l7 3" fill="none" stroke="#eee" strokeWidth="1.200" />
        </svg>
        <span className="ml-[15px] text-[17px] text-[#eee]">英</span>
        <div className="ml-[13px] w-[80px] text-center text-[15px] leading-[22px] text-[#eee]">
          <div>17:27</div>
          <div>2019-3-21</div>
        </div>
        <span className="ml-[11px] h-[16px] w-[8px] shrink-0 border-y border-l border-[#eee]" />
      </div>
    </div>
  );
}

export default function App() {
  return (
    <div className="relative flex h-[1023px] w-[1832px] flex-col overflow-hidden bg-white font-['Noto_Sans','Noto_Sans_CJK_SC',sans-serif]">
      <Ribbon />
      <ComboBar />
      <div className="flex min-h-0 flex-1 bg-[#e8e8e8]">
        <LeftPanel />
        <MiddlePanel />
        <div className="w-[5px] shrink-0 bg-[#f0f0f0]" />
        <MainCanvas />
      </div>
      <StatusBar />
      <Taskbar />
      <Dialog />
    </div>
  );
}
